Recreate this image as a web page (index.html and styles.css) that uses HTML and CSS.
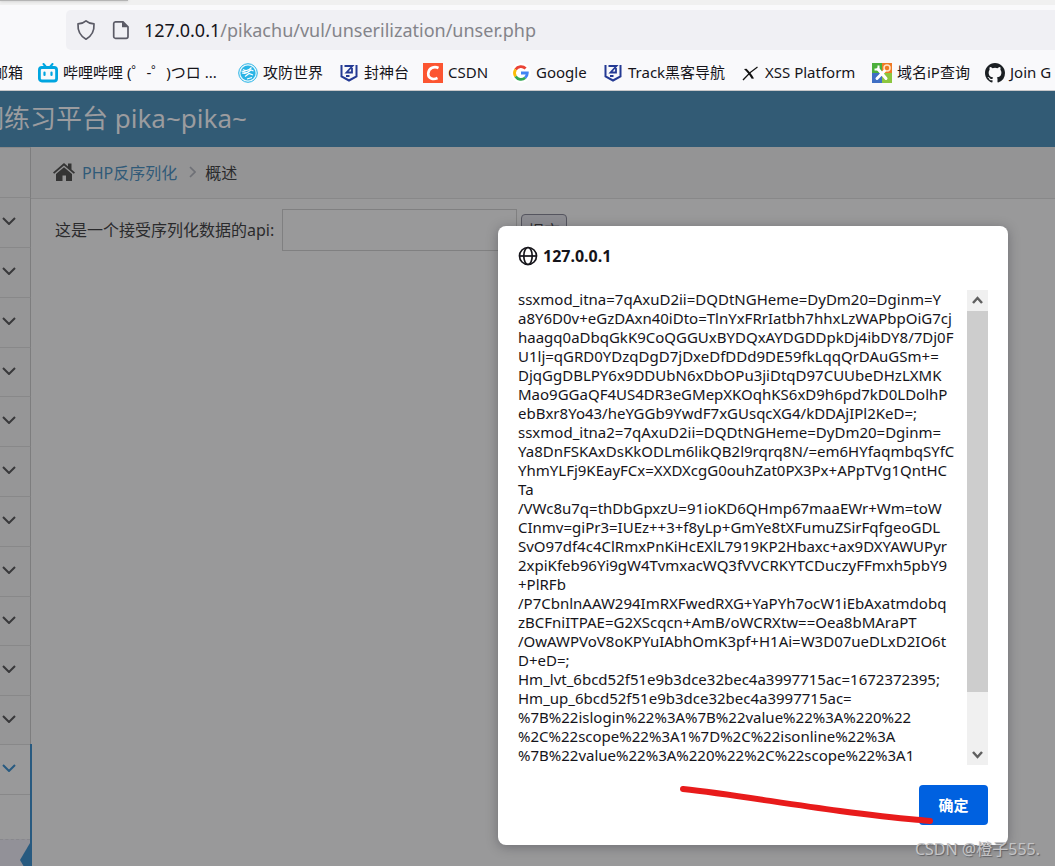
FILE: index.html
```html
<!DOCTYPE html>
<html lang="zh-CN">
<head>
<meta charset="utf-8">
<title>pika~pika~</title>
<link rel="stylesheet" href="styles.css">
</head>
<body>
<div class="chrome">
  <div class="tabstrip"><div class="tab"></div></div>
  <div class="urlbar">
    <svg class="url-icon" viewBox="0 0 20 22"><path d="M10 1.800c2.200 2 5 2.900 8 3.100.4 6.500-2 12-8 15.300C4 16.900 1.600 11.400 2 4.900c3-.2 5.800-1.100 8-3.100z" fill="none" stroke="#5b5b66" stroke-width="1.700" stroke-linejoin="round"/></svg>
    <svg class="url-icon" viewBox="0 0 20 22"><path d="M4.500 2.800h7.500l5 5v9.700a1.800 1.800 0 0 1-1.800 1.800H4.500a1.800 1.800 0 0 1-1.800-1.800v-13a1.800 1.800 0 0 1 1.800-1.700z" fill="none" stroke="#5b5b66" stroke-width="1.700"/><path d="M11 2.500v5.800h6z" fill="#5b5b66"/></svg>
    <div class="url"><b>127.0.0.1</b>/pikachu/vul/unserilization/unser.php</div>
  </div>
  <nav class="bookmarks">
    <a class="bm bm-mail" href="#"><span>邮箱</span></a>
    <a class="bm bm-bili" href="#"><svg viewBox="0 0 20 20"><path d="M5.500 1l3 3.500M14.500 1l-3 3.500" stroke="#00a5e0" stroke-width="2" stroke-linecap="round"/><rect x="1.400" y="4.500" width="17.200" height="13.500" rx="2.500" fill="none" stroke="#00a5e0" stroke-width="2.800"/><path d="M6.500 9.500v2.500M13.500 9.500v2.500" stroke="#00a5e0" stroke-width="2.200" stroke-linecap="round"/></svg><span>哔哩哔哩 (゜-゜)つロ ...</span></a>
    <a class="bm bm-gf" href="#"><svg viewBox="0 0 20 20"><circle cx="10" cy="10" r="9.300" fill="#e8f7fc" stroke="#2ab4e6" stroke-width="1"/><circle cx="10" cy="10" r="7.600" fill="#2ab4e6"/><path d="M5 6.500c3 2 6 1 8.500-2M4 10c4 1 6-.5 9-3l2.500 1M7 13.500l4-3 4 1.500M9 16l5-1.500M3.500 8l4 1" fill="none" stroke="#fff" stroke-width="1.200"/></svg><span>攻防世界</span></a>
    <a class="bm bm-fst" href="#"><svg viewBox="0 0 20 20"><path d="M3.500 3H2.500v10.500L10 17.500l7.500-4V2" fill="none" stroke="#243a94" stroke-width="2"/><path d="M5.500 3h8L7.500 9.500H13V5M7 13h3.500" fill="none" stroke="#243a94" stroke-width="1.800"/></svg><span>封神台</span></a>
    <a class="bm bm-csdn" href="#"><svg viewBox="0 0 20 20"><path fill="#fc5531" d="M0 0h20v20H0z"/><path d="M15.500 5C11.500 3 5.800 4.500 5.200 10.500 5 16 10.500 17 14.500 15" fill="none" stroke="#fff" stroke-width="2.600"/></svg><span>CSDN</span></a>
    <a class="bm bm-google" href="#"><svg viewBox="0 0 20 20"><circle cx="10" cy="10" r="10" fill="#fff"/><path d="M4.600 6.500A6.400 6.400 0 0 1 14.600 5.500" fill="none" stroke="#ea4335" stroke-width="2.800"/><path d="M4.600 6.500a6.400 6.400 0 0 0 0 7" fill="none" stroke="#fbbc05" stroke-width="2.800"/><path d="M4.600 13.500a6.400 6.400 0 0 0 9.600 1.300" fill="none" stroke="#34a853" stroke-width="2.800"/><path d="M10 10h6.300c0 2-.8 3.600-2.100 4.800" fill="none" stroke="#4285f4" stroke-width="2.800"/></svg><span>Google</span></a>
    <a class="bm bm-track" href="#"><svg viewBox="0 0 20 20"><path d="M3.500 3H2.500v10.500L10 17.500l7.500-4V2" fill="none" stroke="#243a94" stroke-width="2"/><path d="M5.500 3h8L7.500 9.500H13V5M7 13h3.500" fill="none" stroke="#243a94" stroke-width="1.800"/></svg><span>Track黑客导航</span></a>
    <a class="bm bm-xss" href="#"><svg viewBox="0 0 20 20"><path d="M4 6l2.500-.3C9.500 8.500 12 11.500 14 15.500l-2.300.3C9.500 12 7 9 4 6z" fill="#111"/><path d="M17.500 4C12 7.500 8 11 3 17" fill="none" stroke="#111" stroke-width="1.300"/></svg><span>XSS Platform</span></a>
    <a class="bm bm-ip" href="#"><svg viewBox="0 0 20 20"><path fill="#4caf3c" d="M0 0h10v10H0z"/><path fill="#ef7a24" d="M10 0h10v10H10z"/><path fill="#3f6fc4" d="M0 10h10v10H0z"/><path fill="#8cc63f" d="M10 10h10v10H10z"/><circle cx="15" cy="5" r="3" fill="none" stroke="#ffe4c4" stroke-width="1.500"/><path d="M6 6l8 9.500M12.500 8L5 15.500" stroke="#fff" stroke-width="3" stroke-linecap="round"/><path d="M2.500 6.500h4v-4" fill="none" stroke="#fff" stroke-width="2"/></svg><span>域名iP查询</span></a>
    <a class="bm bm-gh" href="#"><svg viewBox="0 0 16 16"><path fill="#1b1f23" d="M8 0C3.580 0 0 3.580 0 8c0 3.540 2.290 6.530 5.470 7.590.4.070.55-.17.55-.38 0-.19-.01-.82-.01-1.490-2.010.37-2.530-.49-2.690-.94-.09-.23-.48-.94-.82-1.130-.28-.15-.68-.52-.01-.53.63-.01 1.080.58 1.230.82.72 1.210 1.870.87 2.330.66.070-.52.28-.87.51-1.070-1.780-.2-3.640-.89-3.640-3.950 0-.87.31-1.590.82-2.150-.08-.2-.36-1.020.08-2.120 0 0 .67-.21 2.200.82a7.500 7.500 0 0 1 4 0c1.530-1.040 2.200-.82 2.200-.82.44 1.100.16 1.920.08 2.120.51.56.82 1.270.82 2.150 0 3.070-1.870 3.750-3.650 3.950.29.25.54.73.54 1.480 0 1.070-.01 1.930-.01 2.200 0 .21.15.46.55.38A8.010 8.010 0 0 0 16 8c0-4.420-3.580-8-8-8z"/></svg><span>Join G</span></a>
  </nav>
</div>

<header class="banner"><span>洞练习平台 pika~pika~</span></header>

<div class="page">
  <aside class="sidebar">
    <div class="item item-top"></div>
    <div class="item"><svg class="chev" viewBox="0 0 14 8"><path d="M1 1l6 6 6-6"/></svg></div>
    <div class="item"><svg class="chev" viewBox="0 0 14 8"><path d="M1 1l6 6 6-6"/></svg></div>
    <div class="item"><svg class="chev" viewBox="0 0 14 8"><path d="M1 1l6 6 6-6"/></svg></div>
    <div class="item"><svg class="chev" viewBox="0 0 14 8"><path d="M1 1l6 6 6-6"/></svg></div>
    <div class="item"><svg class="chev" viewBox="0 0 14 8"><path d="M1 1l6 6 6-6"/></svg></div>
    <div class="item"><svg class="chev" viewBox="0 0 14 8"><path d="M1 1l6 6 6-6"/></svg></div>
    <div class="item"><svg class="chev" viewBox="0 0 14 8"><path d="M1 1l6 6 6-6"/></svg></div>
    <div class="item"><svg class="chev" viewBox="0 0 14 8"><path d="M1 1l6 6 6-6"/></svg></div>
    <div class="item"><svg class="chev" viewBox="0 0 14 8"><path d="M1 1l6 6 6-6"/></svg></div>
    <div class="item"><svg class="chev" viewBox="0 0 14 8"><path d="M1 1l6 6 6-6"/></svg></div>
    <div class="item"><svg class="chev" viewBox="0 0 14 8"><path d="M1 1l6 6 6-6"/></svg></div>
    <div class="open-group">
      <div class="item item-open"><svg class="chev" viewBox="0 0 14 8"><path d="M1 1l6 6 6-6"/></svg></div>
      <div class="sub"></div>
      <div class="sub sub-current"><svg viewBox="0 0 10 34"><path d="M10 0v34L0 17z" fill="#285a80"/></svg></div>
    </div>
  </aside>
  <main class="main">
    <nav class="crumbs">
      <svg class="home" viewBox="0 0 22 18"><path d="M11 0l4 3.500V.5h3.500v6L22 9.500l-1.200 1.300L11 2.600 1.200 10.800 0 9.500z" fill="#343434"/><path d="M11 4.200l8 6.700V18h-6v-5.500H9.500V18H3v-7.100z" fill="#343434"/></svg>
      <a href="#">PHP反序列化</a>
      <svg class="sep" viewBox="0 0 7 12"><path d="M1 1l5 5-5 5" fill="none" stroke="#6e7076" stroke-width="1.700"/></svg>
      <span>概述</span>
    </nav>
    <form class="api-form">
      <label for="api">这是一个接受序列化数据的api:</label>
      <input id="api" type="text">
      <button type="button">提交</button>
    </form>
  </main>
</div>

<div class="dialog" role="dialog" aria-labelledby="dlg-title">
  <div class="dlg-head">
    <svg viewBox="0 0 20 20" fill="none" stroke="#15141a" stroke-width="1.700"><circle cx="10" cy="10" r="8.500"/><ellipse cx="10" cy="10" rx="4.200" ry="8.500"/><path d="M1 10h18"/></svg>
    <strong id="dlg-title">127.0.0.1</strong>
  </div>
  <div class="dlg-body">
    <pre class="dlg-text">ssxmod_itna=7qAxuD2ii=DQDtNGHeme=DyDm20=Dginm=Y
a8Y6D0v+eGzDAxn40iDto=TlnYxFRrIatbh7hhxLzWAPbpOiG7cj
haagq0aDbqGkK9CoQGGUxBYDQxAYDGDDpkDj4ibDY8/7Dj0F
U1lj=qGRD0YDzqDgD7jDxeDfDDd9DE59fkLqqQrDAuGSm+=
DjqGgDBLPY6x9DDUbN6xDbOPu3jiDtqD97CUUbeDHzLXMK
Mao9GGaQF4US4DR3eGMepXKOqhKS6xD9h6pd7kD0LDolhP
ebBxr8Yo43/heYGGb9YwdF7xGUsqcXG4/kDDAjIPl2KeD=;
ssxmod_itna2=7qAxuD2ii=DQDtNGHeme=DyDm20=Dginm=
Ya8DnFSKAxDsKkODLm6likQB2l9rqrq8N/=em6HYfaqmbqSYfC
YhmYLFj9KEayFCx=XXDXcgG0ouhZat0PX3Px+APpTVg1QntHC
Ta
/VWc8u7q=thDbGpxzU=91ioKD6QHmp67maaEWr+Wm=toW
CInmv=giPr3=IUEz++3+f8yLp+GmYe8tXFumuZSirFqfgeoGDL
SvO97df4c4ClRmxPnKiHcEXlL7919KP2Hbaxc+ax9DXYAWUPyr
2xpiKfeb96Yi9gW4TvmxacWQ3fVVCRKYTCDuczyFFmxh5pbY9
+PlRFb
/P7CbnlnAAW294ImRXFwedRXG+YaPYh7ocW1iEbAxatmdobq
zBCFniITPAE=G2XScqcn+AmB/oWCRXtw==Oea8bMAraPT
/OwAWPVoV8oKPYuIAbhOmK3pf+H1Ai=W3D07ueDLxD2IO6t
D+eD=;
Hm_lvt_6bcd52f51e9b3dce32bec4a3997715ac=1672372395;
Hm_up_6bcd52f51e9b3dce32bec4a3997715ac=
%7B%22islogin%22%3A%7B%22value%22%3A%220%22
%2C%22scope%22%3A1%7D%2C%22isonline%22%3A
%7B%22value%22%3A%220%22%2C%22scope%22%3A1</pre>
    <div class="scroll">
      <svg viewBox="0 0 21 21"><path d="M6 13l4.500-5L15 13"/></svg>
      <div class="thumb"></div>
      <svg viewBox="0 0 21 21"><path d="M6 8l4.500 5L15 8"/></svg>
    </div>
  </div>
  <button class="ok" type="button">确定</button>
</div>

<svg class="stroke" viewBox="0 0 256 42"><path d="M3 4C50 9 100 18 160 26S230 34 250 36" fill="none" stroke="#e81b1b" stroke-width="6" stroke-linecap="round"/></svg>
<div class="watermark">CSDN @橙子555.</div>
</body>
</html>
```
FILE: styles.css
```css
* { box-sizing: border-box; }
body {
  margin: 0;
  height: 100vh;
  display: flex;
  flex-direction: column;
  position: relative;
  overflow: hidden;
  background: #99999a;
  color: #2a2a2c;
  font-family: "Noto Sans", "Noto Sans CJK SC", sans-serif;
}
a { color: inherit; text-decoration: none; }
button, input { font: inherit; }
svg { display: block; flex: none; }

.chrome { flex: none; background: #f9f9fb; border-bottom: 1px solid #c8c8ca; color: #15141a; }
.tabstrip { height: 5px; background: #f0f0f0; }
.tab { width: 128px; height: 1px; background: #b4b4b4; box-shadow: 0 0 3px #a0a0a0; }
.urlbar {
  display: flex;
  align-items: center;
  gap: 15px;
  height: 40px;
  margin: 5px 0 0 66px;
  padding-left: 10px;
  border-radius: 5px 0 0 5px;
  background: #f0f0f4;
}
.url-icon { width: 20px; height: 22px; }
.url { margin-left: -2px; font-size: 18px; color: #84848a; white-space: nowrap; }
.url b { font-weight: 400; color: #15141a; }
.bookmarks {
  display: flex;
  align-items: center;
  gap: 15px;
  height: 40px;
  padding-top: 5px;
  overflow: hidden;
  font-size: 15px;
  white-space: nowrap;
}
.bm { display: flex; flex: none; align-items: center; gap: 5px; }
.bm svg { width: 20px; height: 20px; }
.bm span { padding-bottom: 2px; }
.bm-mail { width: 23px; justify-content: flex-end; }
.bm-bili { width: 185px; }
.bm-gf { width: 86px; }
.bm-fst { width: 69px; }
.bm-csdn { width: 73px; }
.bm-google { width: 77px; }
.bm-track { width: 122px; }
.bm-xss { width: 117px; }
.bm-ip { width: 98px; }

.banner {
  flex: none;
  display: flex;
  align-items: center;
  height: 56px;
  padding-bottom: 4px;
  background: #325b75;
  color: #9b9c9f;
  font-size: 26px;
  white-space: nowrap;
}
.banner span { margin-left: -22px; }

.page { flex: 1; display: flex; min-height: 0; }
.sidebar { flex: none; width: 32px; overflow: hidden; }
.item {
  display: flex;
  align-items: center;
  width: 31px;
  height: 50px;
  padding: 0 0 3px 2px;
  border-top: 1px solid #888889;
  border-right: 1px solid #7d7d7e;
  background: #969697;
}
.item:nth-child(5n) { height: 49px; }
.chev { width: 14px; height: 8px; fill: none; stroke: #38383a; stroke-width: 2; }
.open-group { margin-top: -1px; border-right: 2px solid #285a80; }
.item-open { width: 30px; border-right: 0; background: #99999a; }
.item-open .chev { stroke: #285a80; }
.sub { height: 45px; border-top: 1px solid #888889; }
.sub-current { display: flex; justify-content: flex-end; padding-top: 3px; border-top: 1px dashed #88888c; background: #929198; }
.sub-current svg { width: 10px; height: 34px; }

.main { flex: 1; min-width: 0; font-size: 16px; }
.crumbs {
  display: flex;
  align-items: center;
  height: 52px;
  padding: 0 0 2px 22px;
  margin-left: -1px;
  border-bottom: 1px solid #888889;
  background: #949495;
}
.crumbs a { margin-left: 7px; color: #305a78; }
.crumbs span { margin-left: 9px; }
.home { width: 22px; height: 18px; }
.sep { width: 7px; height: 12px; margin-left: 12px; }
.api-form { display: flex; align-items: center; padding: 10px 0 0 23px; gap: 4px; }
.api-form label { padding-bottom: 2px; margin-right: 4px; }
.api-form input {
  width: 235px;
  height: 42px;
  border: 1px solid #808081;
  background: transparent;
}
.api-form button {
  width: 46px;
  height: 32px;
  padding: 0;
  border: 1px solid #55555f;
  border-radius: 4px;
  background: #8d8d92;
  color: #2a2a2c;
}

.dialog {
  position: absolute;
  top: 226px;
  right: 47px;
  width: 510px;
  padding: 20px;
  border-radius: 8px;
  background: #fff;
  color: #15141a;
  box-shadow: 0 2px 12px rgba(30, 30, 40, .35);
}
.dlg-head { display: flex; align-items: center; gap: 5px; height: 20px; margin-bottom: 24px; font-size: 16px; }
.dlg-head svg { width: 20px; height: 20px; }
.dlg-body { display: flex; justify-content: space-between; }
.dlg-text { flex: none; width: 449px; margin: 0; font: 15px/19px "Noto Sans", sans-serif; }
.scroll { flex: none; display: flex; flex-direction: column; width: 21px; background: #f0f0f0; }
.scroll svg { width: 21px; height: 21px; fill: none; stroke: #606060; stroke-width: 2.500; }
.scroll svg:last-child { margin-top: auto; }
.thumb { height: 381px; background: #cdcdcd; }
.ok {
  display: block;
  width: 69px;
  height: 40px;
  margin: 20px 0 0 auto;
  padding: 0 0 2px;
  border: 0;
  border-radius: 4px;
  background: #0061e0;
  color: #fff;
  font-size: 15px;
  font-weight: 700;
}
.stroke { position: absolute; right: 119px; top: 785px; width: 256px; height: 42px; }
.watermark {
  position: absolute;
  right: 15px;
  bottom: 5px;
  font-size: 16px;
  line-height: 24px;
  color: #c4c4c6;
  text-shadow: 1px 1px 1px #606064;
}
```
